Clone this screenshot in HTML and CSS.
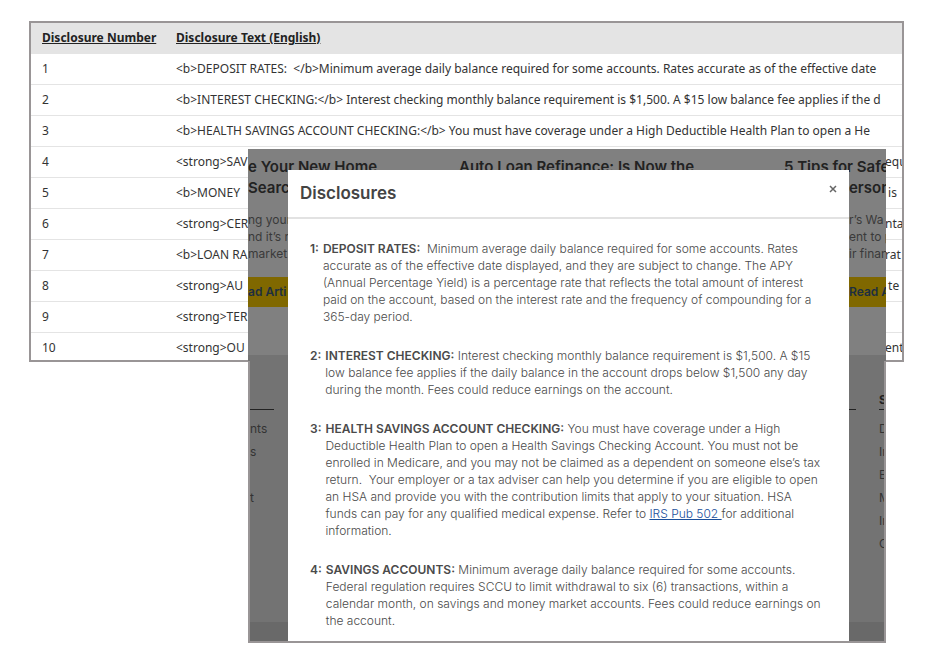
FILE: index.html
```html
<!DOCTYPE html>
<html lang="en">
<head>
    <meta charset="UTF-8">
    <meta name="viewport" content="width=device-width, initial-scale=1.0">
    <title>Disclosures</title>
    <link rel="stylesheet" href="styles.css">
</head>
<body>
    <!-- Disclosure list -->
    <main class="list-panel">
        <table class="disclosure-table">
            <colgroup>
                <col class="col-number">
                <col class="col-text">
                <col class="col-tail">
            </colgroup>
            <thead>
                <tr>
                    <th scope="col">Disclosure Number</th>
                    <th scope="col" colspan="2">Disclosure Text (English)</th>
                </tr>
            </thead>
            <tbody>
                <tr><td>1</td><td colspan="2">&lt;b&gt;DEPOSIT RATES:&nbsp; &lt;/b&gt;Minimum average daily balance required for some accounts. Rates accurate as of the effective date</td></tr>
                <tr><td>2</td><td colspan="2">&lt;b&gt;INTEREST CHECKING:&lt;/b&gt; Interest checking monthly balance requirement is $1,500. A $15 low balance fee applies if the d</td></tr>
                <tr><td>3</td><td colspan="2">&lt;b&gt;HEALTH SAVINGS ACCOUNT CHECKING:&lt;/b&gt; You must have coverage under a High Deductible Health Plan to open a He</td></tr>
                <tr><td>4</td><td>&lt;strong&gt;SAV</td><td class="tail">equ</td></tr>
                <tr><td>5</td><td>&lt;b&gt;MONEY</td><td class="tail">&nbsp;is</td></tr>
                <tr><td>6</td><td>&lt;strong&gt;CER</td><td class="tail">nta</td></tr>
                <tr><td>7</td><td>&lt;b&gt;LOAN RA</td><td class="tail">rat</td></tr>
                <tr><td>8</td><td>&lt;strong&gt;AU</td><td class="tail">&nbsp;te</td></tr>
                <tr><td>9</td><td>&lt;strong&gt;TER</td><td class="tail"></td></tr>
                <tr><td>10</td><td>&lt;strong&gt;OU</td><td class="tail">ent</td></tr>
            </tbody>
        </table>
    </main>

    <!-- Site page with the disclosures window open -->
    <div class="site">
        <div class="site-page">
            <section class="articles">
                <article class="article">
                    <h3>e Your New Home<br>Search</h3>
                    <p>ng your<br>nd it’s n<br>market.</p>
                    <a class="read-more" href="#">ad Arti</a>
                </article>
                <article class="article article-middle">
                    <h3>Auto Loan Refinance: Is Now the</h3>
                </article>
                <article class="article article-last">
                    <h3>5 Tips for Safeg<br><span class="inset">erson</span></h3>
                    <p class="inset">r’s Wa<br>ent to p<br>ir finan</p>
                    <a class="read-more inset" href="#">Read A</a>
                </article>
            </section>
            <footer class="site-footer">
                <div class="footer-column">
                    <h4>&nbsp;</h4>
                    <ul>
                        <li>nts</li>
                        <li>s</li>
                        <li></li>
                        <li>t</li>
                    </ul>
                </div>
                <div class="footer-column footer-middle">
                    <h4>&nbsp;</h4>
                </div>
                <div class="footer-column footer-last">
                    <h4>S</h4>
                    <ul>
                        <li>D</li>
                        <li>In</li>
                        <li>E</li>
                        <li>M</li>
                        <li>In</li>
                        <li>C</li>
                    </ul>
                </div>
            </footer>
            <div class="site-bottom"></div>
        </div>

        <div class="modal" role="dialog" aria-labelledby="modalTitle">
            <div class="modal-header">
                <h2 id="modalTitle">Disclosures</h2>
                <button class="close" type="button" aria-label="Close">
                    <svg width="8" height="8" viewBox="0 0 8 8"><path d="M1 1L7 7M7 1L1 7" stroke="#666" stroke-width="1.5" fill="none"/></svg>
                </button>
            </div>
            <div class="modal-body">
                <div class="disclosure">
                    <b>1:</b>
                    <p><b>DEPOSIT RATES:</b>&nbsp; Minimum average daily balance required for some accounts. Rates<br>
                    accurate as of the effective date displayed, and they are subject to change. The APY<br>
                    (Annual Percentage Yield) is a percentage rate that reflects the total amount of interest<br>
                    paid on the account, based on the interest rate and the frequency of compounding for a<br>
                    365-day period.</p>
                </div>
                <div class="disclosure">
                    <b>2:</b>
                    <p><b>INTEREST CHECKING:</b> Interest checking monthly balance requirement is $1,500. A $15<br>
                    low balance fee applies if the daily balance in the account drops below $1,500 any day<br>
                    during the month. Fees could reduce earnings on the account.</p>
                </div>
                <div class="disclosure">
                    <b>3:</b>
                    <p><b>HEALTH SAVINGS ACCOUNT CHECKING:</b> You must have coverage under a High<br>
                    Deductible Health Plan to open a Health Savings Checking Account. You must not be<br>
                    enrolled in Medicare, and you may not be claimed as a dependent on someone else’s tax<br>
                    return.&nbsp; Your employer or a tax adviser can help you determine if you are eligible to open<br>
                    an HSA and provide you with the contribution limits that apply to your situation. HSA<br>
                    funds can pay for any qualified medical expense. Refer to <a href="#">IRS Pub 502 </a>for additional<br>
                    information.</p>
                </div>
                <div class="disclosure">
                    <b>4:</b>
                    <p><b>SAVINGS ACCOUNTS:</b> Minimum average daily balance required for some accounts.<br>
                    Federal regulation requires SCCU to limit withdrawal to six (6) transactions, within a<br>
                    calendar month, on savings and money market accounts. Fees could reduce earnings on<br>
                    the account.</p>
                </div>
            </div>
        </div>
    </div>
</body>
</html>
```

FILE: styles.css
```css
* {
    box-sizing: border-box;
}
body {
    margin: 0;
    padding: 21px 29px;
    min-height: 100vh;
    background-color: #ffffff;
    position: relative;
}

/* Disclosure list */
.list-panel {
    border: 2px solid #999596;
    overflow: hidden;
}
.disclosure-table {
    width: 100%;
    table-layout: fixed;
    border-collapse: collapse;
    font-family: "Noto Sans", "Open Sans", sans-serif;
    font-size: 12px;
    line-height: 18px;
    color: #333333;
}
.col-number {
    width: 134px;
}
.col-tail {
    width: 17px;
}
.disclosure-table th,
.disclosure-table td {
    padding: 6px 0 6px 11px;
    text-align: left;
    white-space: nowrap;
    overflow: hidden;
}
.disclosure-table th {
    background-color: #e4e4e4;
    font-weight: 700;
    text-decoration: underline;
    color: #222222;
}
.disclosure-table td {
    border-top: 1px solid #e4e4e4;
}
.disclosure-table tr:last-child td {
    padding-bottom: 3px;
}
.disclosure-table .tail {
    padding-left: 0;
}

/* Site page behind the window */
.site {
    position: absolute;
    top: 149px;
    left: 248px;
    right: 47px;
    display: grid;
    grid-template-columns: minmax(0, 1fr);
    overflow: hidden;
    background-color: #808080;
    border-bottom: 2px solid #999596;
    font-family: Inter, "Open Sans", sans-serif;
}
.site::after {
    content: "";
    position: absolute;
    top: 212px;
    bottom: 0;
    left: 0;
    right: 0;
    border: solid #999596;
    border-width: 0 2px;
    pointer-events: none;
}
.site-page,
.modal {
    grid-area: 1 / 1;
}
.site-page {
    display: flex;
    flex-direction: column;
}
.articles {
    display: flex;
    height: 206px;
    padding-top: 7px;
    white-space: nowrap;
}
.article {
    flex: 0 0 211px;
}
.article-middle {
    flex-basis: 325px;
}
.article-last {
    flex: 1;
}
.article h3 {
    margin: 0;
    font-size: 15px;
    line-height: 21px;
    font-weight: 600;
    color: #222222;
}
.article p {
    margin: 13px 0 15px;
    font-size: 12px;
    line-height: 17px;
    color: #3a3a3a;
}
.article .inset {
    margin-left: 65px;
}
.read-more {
    display: block;
    font-size: 12px;
    line-height: 30px;
    font-weight: 600;
    color: #1d2f40;
    background-color: #806800;
    text-decoration: none;
}
.site-footer {
    flex: 1;
    display: flex;
    gap: 23px;
    padding-top: 35px;
    background-color: #737373;
}
.footer-column {
    flex: 0 0 26px;
}
.footer-middle {
    flex-basis: 559px;
}
.footer-last {
    flex: 1;
}
.footer-column h4 {
    margin: 0 0 8px;
    font-size: 12px;
    line-height: 19px;
    border-bottom: 1px solid #222222;
    color: #222222;
}
.footer-column ul {
    margin: 0;
    padding: 0 0 0 2px;
    list-style: none;
    font-size: 12px;
    line-height: 22px;
    color: #333333;
}
.footer-last ul {
    padding-left: 0;
}
.footer-column li {
    height: 23px;
}
.site-bottom {
    height: 19px;
    background-color: #696969;
}

/* Disclosures window */
.modal {
    z-index: 1;
    margin: 21px 37px 0 40px;
    background-color: #ffffff;
    color: #4a4a4a;
}
.modal-header {
    display: flex;
    justify-content: space-between;
    padding: 11px 12px 12px;
    border-bottom: 2px solid #e2e2e2;
}
.modal-header h2 {
    margin: 0;
    font-size: 17px;
    line-height: 24px;
    font-weight: 600;
    color: #444444;
}
.close {
    display: flex;
    align-items: center;
    justify-content: center;
    align-self: flex-start;
    width: 8px;
    height: 16px;
    padding: 0;
    background: none;
    border: none;
    cursor: pointer;
}
.modal-body {
    padding: 21px 20px 12px 22px;
    font-size: 12px;
    line-height: 17px;
    font-weight: 300;
}
.disclosure {
    display: flex;
    gap: 4px;
    margin-bottom: 22px;
    white-space: nowrap;
}
.disclosure:last-child {
    margin-bottom: 0;
}
.disclosure p {
    margin: 0;
}
.disclosure b {
    font-weight: 600;
}
.disclosure a {
    color: #1a4f9c;
}
```
